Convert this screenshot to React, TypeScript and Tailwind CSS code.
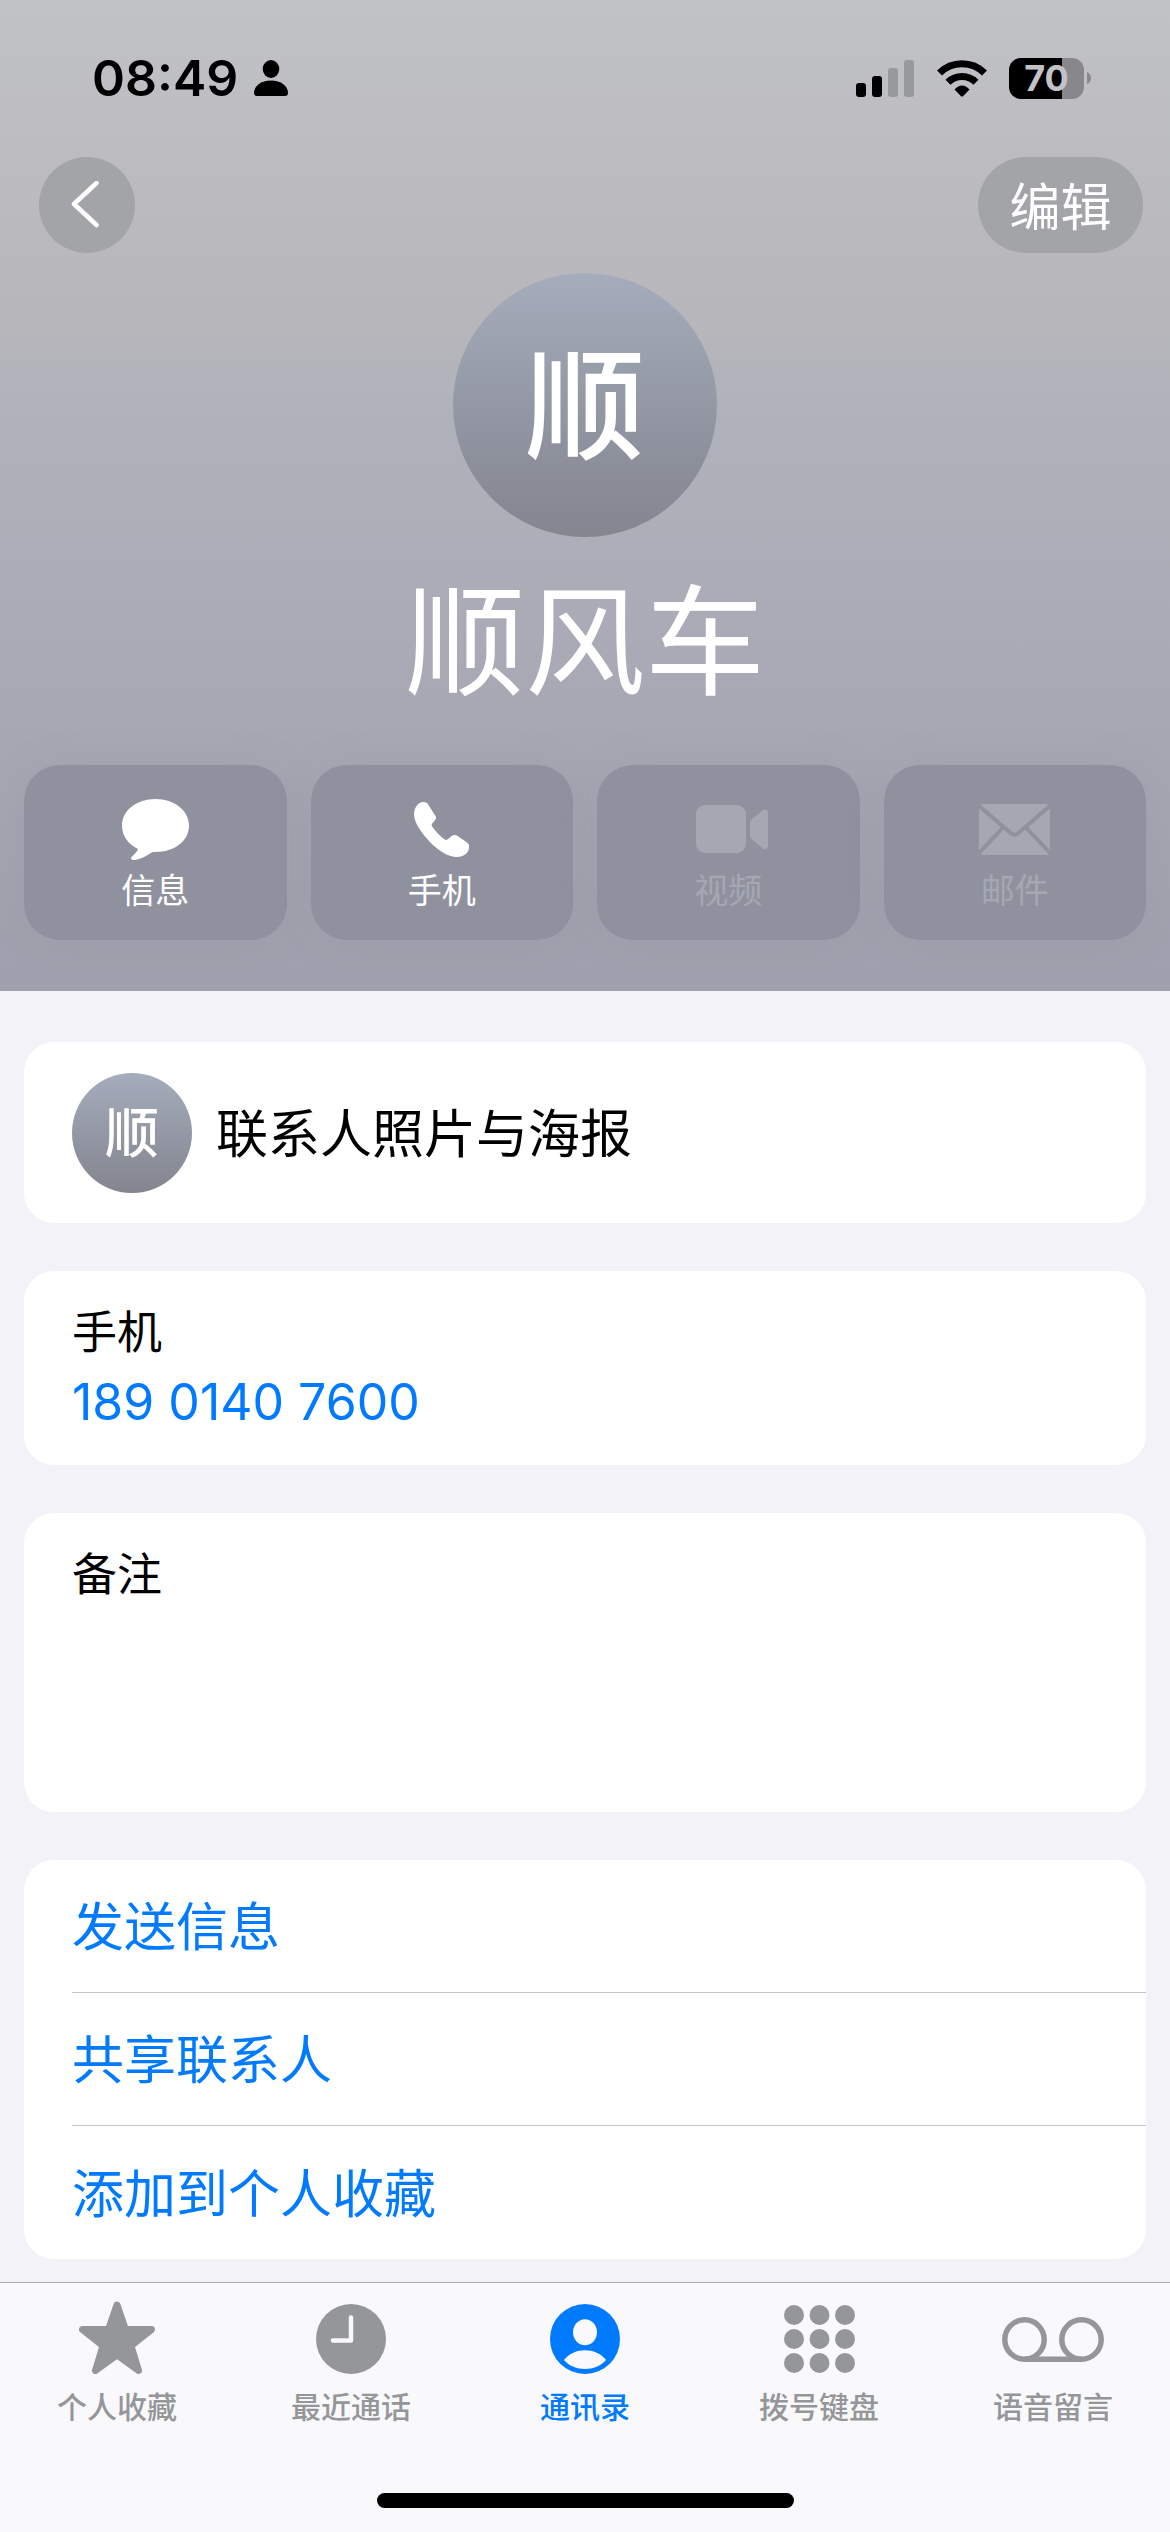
import React from "react";

const BubbleIcon = () => (
  <svg width="67" height="61" viewBox="0 0 67 61" fill="currentColor" aria-hidden="true">
    <path d="M33.5 0C52.5 0 67 11.500 67 26.500C67 42 52.500 53 33.500 53H30.500C25.500 56.500 19 60 13 61C9.500 61.500 8 59.500 10 57.500C13 54.500 15.500 52.500 16 50C6 45.500 0 36.500 0 26.500C0 11.500 14.500 0 33.500 0Z" />
  </svg>
);

const PhoneIcon = () => (
  <svg width="55" height="55" viewBox="0 0 55 55" fill="currentColor" aria-hidden="true">
    <path d="M9.600 0C11.500 0 13 .8 14 2.200L21.500 14C22.500 16 22 17 20.500 19L18.200 21.500C17.200 22.800 17.600 23.600 18.500 25C22 30 26 34 30.500 37.200C32 38.200 33 38.200 34.500 36.800L37 34.500C39.200 32.500 41.500 32.500 44 34.200L53 40.500C54.800 42 55.300 43.500 55 46C54.300 51.500 49.500 55 43 55C34 55 24 48.500 15 39C6 29 0 19.500 0 12.500C0 6 4 0 9.600 0Z" />
  </svg>
);

const VideoIcon = () => (
  <svg width="80" height="48" viewBox="-8 0 80 48" fill="currentColor" aria-hidden="true">
    <rect width="50" height="48" rx="9" />
    <path d="M54 18C54 16.500 54.500 15.500 55.500 14.500L66 5.800C69 3.500 72 4.500 72 8V40.500C72 44 69 45 66 42.700L55.500 34C54.500 33 54 32 54 30.500Z" />
  </svg>
);

const MailIcon = () => (
  <svg width="71" height="51" viewBox="0 0 71 51" aria-hidden="true">
    <rect width="71" height="51" rx="4" fill="currentColor" />
    <g fill="none" stroke="#8f929e" strokeWidth="4">
      <path d="M-1 1L31 28.500Q35.500 33 40 28.500L72 1" />
      <path d="M24 23.500L-1 50M47 23.500L72 50" />
    </g>
  </svg>
);

const StarIcon = () => (
  <svg width="76" height="73" viewBox="0 0 76 73" className="-mt-1" aria-hidden="true">
    <path
      d="M38 4L46.400 28.500H72.500L52 44.700L59.500 69.500L38 54L16.500 69.500L24 44.700L3.500 28.500H29.600Z"
      fill="currentColor"
      stroke="currentColor"
      strokeWidth="7"
      strokeLinejoin="round"
    />
  </svg>
);

const ClockIcon = () => (
  <svg width="70" height="70" viewBox="0 0 70 70" aria-hidden="true">
    <circle cx="35" cy="35" r="35" fill="currentColor" />
    <path d="M35 13.500V36.500H17" fill="none" stroke="#f9f9fb" strokeWidth="4.500" strokeLinecap="round" strokeLinejoin="round" />
  </svg>
);

const PersonCircleIcon = () => (
  <svg width="70" height="70" viewBox="0 0 70 70" aria-hidden="true">
    <circle cx="35" cy="35" r="35" fill="currentColor" />
    <ellipse cx="35" cy="28.300" rx="12" ry="13" fill="#f9f9fb" />
    <path d="M14 56C19 49.500 27 46.300 35 46.300C43 46.300 51 49.500 56 56C51 62 43 65 35 65C27 65 19 62 14 56Z" fill="#f9f9fb" />
  </svg>
);

const KeypadIcon = () => (
  <svg width="71" height="68" viewBox="0 0 71 68" fill="currentColor" aria-hidden="true">
    {[10, 34, 58].map((y) => [10, 35.5, 61].map((x) => <circle key={`${x}-${y}`} cx={x} cy={y} r="10" />))}
  </svg>
);

const VoicemailIcon = () => (
  <svg width="102" height="45" viewBox="0 0 102 45" fill="none" stroke="currentColor" strokeWidth="5.500" aria-hidden="true">
    <circle cx="22.500" cy="22.500" r="19.700" />
    <circle cx="79.500" cy="22.500" r="19.700" />
    <path d="M22.500 42.200H79.500" />
  </svg>
);

function StatusBar() {
  return (
    <div className="flex h-[157px] items-start justify-between pr-[79px] pl-[92px]">
      <div className="flex h-[156px] items-center gap-4">
        <span className="text-[50px] leading-none font-semibold">08:49</span>
        <svg width="34" height="36" viewBox="0 0 34 36" aria-hidden="true">
          <ellipse cx="17" cy="9" rx="8.300" ry="9" />
          <path d="M0 33C0 26 7 20.500 17 20.500S34 26 34 33Q34 36 31 36H3Q0 36 0 33Z" />
        </svg>
      </div>
      <div className="flex h-[156px] items-center">
        <svg width="58" height="37" viewBox="0 0 58 37" aria-hidden="true">
          <rect x="0" y="23" width="10" height="14" rx="3" />
          <rect x="16" y="16" width="10" height="21" rx="3" />
          <rect x="32" y="8" width="10" height="29" rx="3" fill="#98999d" />
          <rect x="48" y="0" width="10" height="37" rx="3" fill="#98999d" />
        </svg>
        <svg width="50" height="37" viewBox="0 0 50 37" className="ml-[23px]" aria-hidden="true">
          <g fill="none" stroke="#000" strokeWidth="7.200">
            <path d="M2.500 13A32 32 0 0 1 47.500 13" />
            <path d="M11 22.200A20 20 0 0 1 39 22.200" />
          </g>
          <path d="M17.500 29.500Q25 21.500 32.500 29.500L26 36.200Q25 37 24 36.200Z" />
        </svg>
        <div className="ml-[22px] flex h-[41px] w-[75px] items-center justify-center rounded-[12px] bg-[linear-gradient(90deg,#000_53px,#88878c_53px)] text-[36px] leading-none font-bold text-[#c3c3c7]">
          70
        </div>
        <svg width="4" height="12" viewBox="0 0 4 12" className="ml-[3px]" fill="#88878c" aria-hidden="true">
          <path d="M0 0Q4 2 4 6T0 12Z" />
        </svg>
      </div>
    </div>
  );
}

const actions = [
  { label: "信息", Icon: BubbleIcon, enabled: true },
  { label: "手机", Icon: PhoneIcon, enabled: true },
  { label: "视频", Icon: VideoIcon, enabled: false },
  { label: "邮件", Icon: MailIcon, enabled: false },
];

const tabs = [
  { label: "个人收藏", Icon: StarIcon, active: false },
  { label: "最近通话", Icon: ClockIcon, active: false },
  { label: "通讯录", Icon: PersonCircleIcon, active: true },
  { label: "拨号键盘", Icon: KeypadIcon, active: false },
  { label: "语音留言", Icon: VoicemailIcon, active: false },
];

export default function App() {
  return (
    <div className="flex min-h-screen flex-col bg-[#f2f2f8] font-['Inter','Noto_Sans_CJK_SC',sans-serif] text-black" lang="zh-CN">
      <header className="bg-[linear-gradient(180deg,#c1c2c6_0%,#b7b7bb_32%,#b0b2bb_42%,#a7a8b4_72%,#9fa0ad_100%)] pb-[51px]">
        <StatusBar />
        <nav className="flex h-24 items-center justify-between pr-[27px] pl-[39px]">
          <button type="button" aria-label="返回" className="flex size-24 items-center justify-center rounded-full bg-[#a3a4a8] pr-1">
            <svg width="28" height="48" viewBox="0 0 28 48" fill="none" stroke="#fff" strokeWidth="4.500" strokeLinecap="round" strokeLinejoin="round" aria-hidden="true">
              <path d="M25.500 2L3 23L25.500 44" />
            </svg>
          </button>
          <button type="button" className="h-24 w-[165px] rounded-full bg-[#a3a4a8] pt-1 text-[51px] leading-none text-white">
            编辑
          </button>
        </nav>
        <div className="mt-5 flex flex-col items-center text-white">
          <div className="flex size-[264px] items-center justify-center rounded-full bg-linear-to-b from-[#a5acbb] to-[#83858f] pt-1 text-[120px] leading-none font-medium">
            顺
          </div>
          <h1 className="mt-[34px] text-[120px] leading-[144px]">顺风车</h1>
        </div>
        <div className="mt-[50px] grid grid-cols-4 gap-6 px-6">
          {actions.map(({ label, Icon, enabled }) => (
            <button
              key={label}
              type="button"
              disabled={!enabled}
              className={`flex h-[175px] flex-col items-center rounded-[36px] bg-[#8f929e] pt-[30px] shadow-[0_0_40px_rgba(120,124,140,0.12)] ${enabled ? "text-white" : "text-[#a5a7b3]"}`}
            >
              <span className="flex h-[68px] items-center">
                <Icon />
              </span>
              <span className="mt-2 text-[34px] leading-10">{label}</span>
            </button>
          ))}
        </div>
      </header>

      <main className="flex flex-1 flex-col gap-12 px-6 pt-[51px] pb-[23px]">
        <button type="button" className="flex h-[181px] items-center gap-6 rounded-[30px] bg-white px-12 text-left">
          <span className="flex size-[120px] items-center justify-center rounded-full bg-linear-to-b from-[#a5acbb] to-[#83858f] pt-0.5 text-[54px] leading-none font-medium text-white">
            顺
          </span>
          <span className="pt-1 text-[52px] leading-[60px]">联系人照片与海报</span>
        </button>

        <section className="flex h-[194px] flex-col rounded-[30px] bg-white px-12 pt-8">
          <h2 className="text-[45px] leading-[60px]">手机</h2>
          <a href="tel:18901407600" className="mt-2 text-[50px] leading-[62px] text-[#007aff]">
            189 0140 7600
          </a>
        </section>

        <section className="flex h-[299px] flex-col rounded-[30px] bg-white px-12 pt-8 pb-6">
          <label htmlFor="note" className="text-[45px] leading-[60px]">
            备注
          </label>
          <textarea id="note" className="w-full flex-1 resize-none bg-transparent text-[45px] outline-none" />
        </section>

        <section className="flex flex-col rounded-[30px] bg-white pl-12 text-[52px] leading-[60px] text-[#007aff]">
          <button type="button" className="h-[133px] border-b border-[#c6c6c8] pt-1 text-left">发送信息</button>
          <button type="button" className="h-[133px] border-b border-[#c6c6c8] pt-1 text-left">共享联系人</button>
          <button type="button" className="h-[133px] pt-1 text-left">添加到个人收藏</button>
        </section>
      </main>

      <footer className="border-t border-[#a9a9ae] bg-[#f9f9fb] pb-6">
        <nav className="grid grid-cols-5">
          {tabs.map(({ label, Icon, active }) => (
            <button
              key={label}
              type="button"
              aria-current={active ? "page" : undefined}
              className={`flex flex-col items-center pt-4 text-[30px] leading-9 font-medium ${active ? "text-[#007aff]" : "text-[#959699]"}`}
            >
              <span className="flex h-20 items-center">
                <Icon />
              </span>
              <span className="mt-[10px]">{label}</span>
            </button>
          ))}
        </nav>
        <div className="mx-auto mt-[68px] h-[15px] w-[417px] rounded-full bg-black" />
      </footer>
    </div>
  );
}
